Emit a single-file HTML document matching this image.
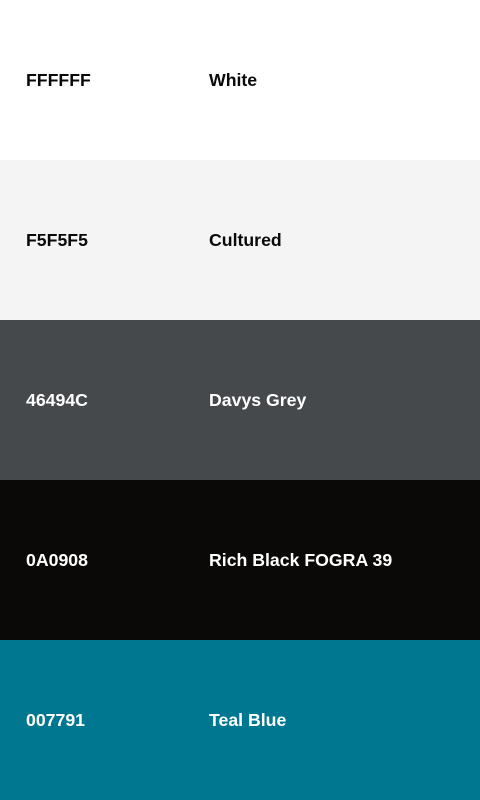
<!DOCTYPE html>
<html><head><meta charset="utf-8"><style>
html,body{margin:0;padding:0;width:480px;height:800px;overflow:hidden}
.r{position:relative;height:160px;font-family:"Liberation Sans",sans-serif;font-weight:bold;font-size:17.7px}
.r span{position:absolute;top:69px;line-height:22px}
.a{left:26px}.b{left:209px}
</style></head><body>
<div class="r" style="background:#fff;color:#0a0908"><span class="a">FFFFFF</span><span class="b">White</span></div>
<div class="r" style="background:#f4f4f4;color:#0a0908"><span class="a">F5F5F5</span><span class="b">Cultured</span></div>
<div class="r" style="background:#46494c;color:#fff"><span class="a">46494C</span><span class="b">Davys Grey</span></div>
<div class="r" style="background:#0a0908;color:#fff"><span class="a">0A0908</span><span class="b">Rich Black FOGRA 39</span></div>
<div class="r" style="background:#007791;color:#fff"><span class="a">007791</span><span class="b">Teal Blue</span></div>
</body></html>
